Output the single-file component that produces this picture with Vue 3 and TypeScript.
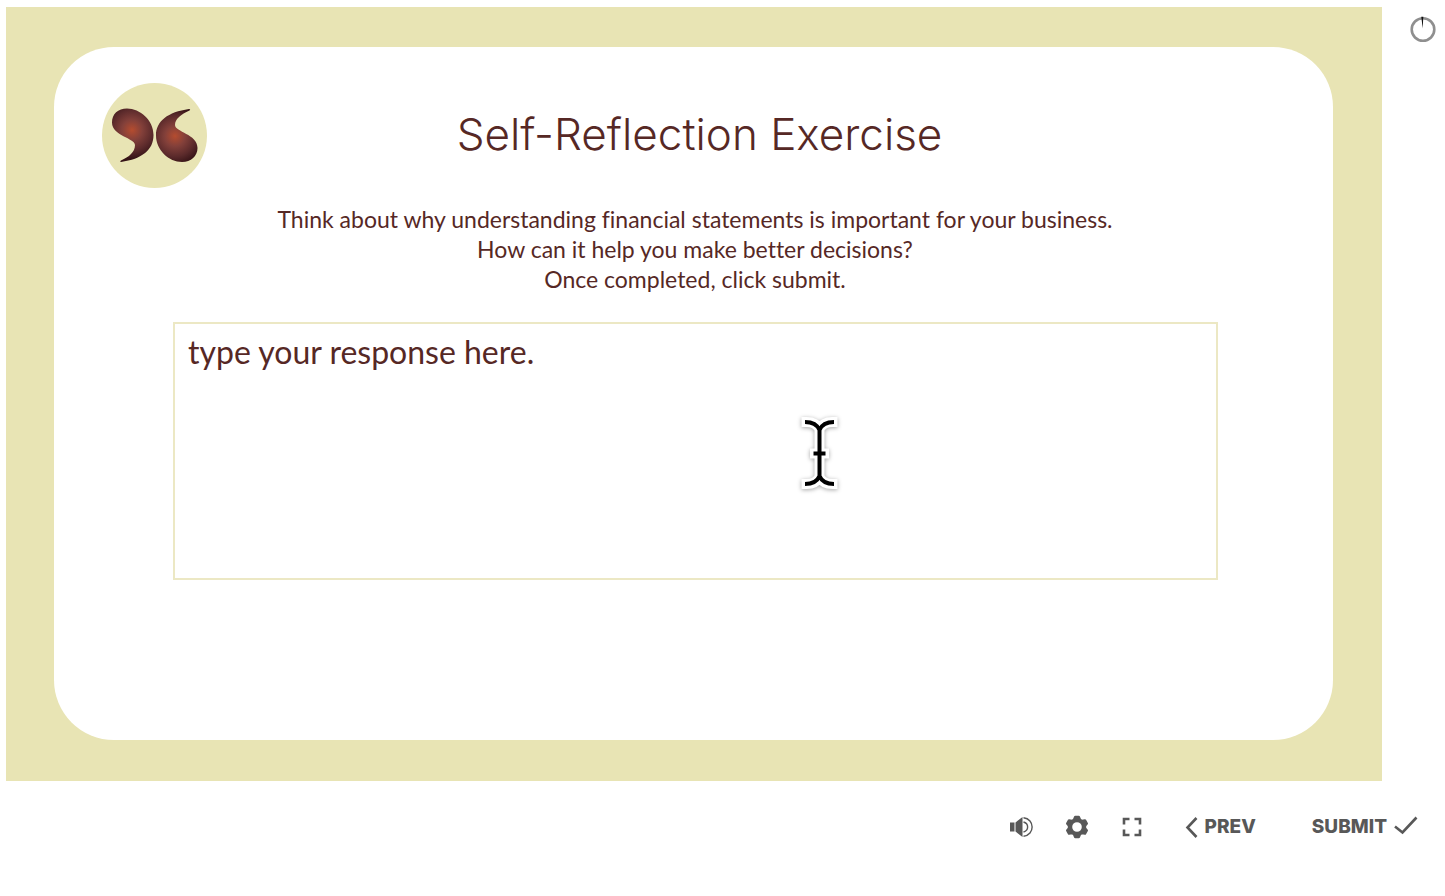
<script setup lang="ts">
import { ref } from 'vue'

const response = ref<string>('type your response here.')
const lines: string[] = [
  'Think about why understanding financial statements is important for your business.',
  'How can it help you make better decisions?',
  'Once completed, click submit.',
]
</script>

<template>
  <div class="player">
    <div class="stage">
      <main class="slide">
        <section class="card">
          <header class="head">
            <svg class="logo" viewBox="0 0 105 105" aria-hidden="true">
              <defs>
                <radialGradient id="bean-left" gradientUnits="userSpaceOnUse" cx="30" cy="47" r="34">
                  <stop offset="0" stop-color="#b54c2f" />
                  <stop offset="0.300" stop-color="#83403a" />
                  <stop offset="0.600" stop-color="#5b2a2b" />
                  <stop offset="0.850" stop-color="#351316" />
                </radialGradient>
                <radialGradient id="bean-right" gradientUnits="userSpaceOnUse" cx="73" cy="53" r="34">
                  <stop offset="0" stop-color="#b54c2f" />
                  <stop offset="0.300" stop-color="#83403a" />
                  <stop offset="0.600" stop-color="#5b2a2b" />
                  <stop offset="0.850" stop-color="#351316" />
                </radialGradient>
              </defs>
              <circle cx="52.5" cy="52.5" r="52.5" fill="#e8e4b4" />
              <path
                fill="url(#bean-left)"
                d="M25 25.500C38 25.500 51.500 37 51.500 52C51.500 67 40 76 19 79C18 78.500 18 78 19 77.500C27 74 33 69 33 62C33 55 10 53 10 39.500C10 31 16 25.500 25 25.500Z"
              />
              <path
                fill="url(#bean-right)"
                d="M80 79C67 79 54 67 54 52.500C54 38 66 29 87 26C88.500 26.200 88.500 27 87.500 27.500C79 31.500 73 36 73 42C73 49 95.500 51 95.500 65C95.500 73 89 79 80 79Z"
              />
            </svg>
            <h1 class="title">Self-Reflection Exercise</h1>
          </header>
          <p class="prompt">
            <span v-for="line in lines" :key="line" class="line">{{ line }}</span>
          </p>
          <div class="answer">
            <textarea v-model="response" class="field" aria-label="Your response" spellcheck="false"></textarea>
            <svg class="caret" viewBox="0 0 40 80" aria-hidden="true">
              <g fill="none">
                <path class="halo" d="M6.500 8C12 8 17 10 19.500 15C22 10 27 8 32.500 8M6.500 70C12 70 17 68 19.500 63C22 68 27 70 32.500 70M19.500 15V63M15 39.500H24" />
                <path class="ink" d="M5 8C12 8 17 10 19.500 16C22 10 27 8 34 8M5 70C12 70 17 68 19.500 62C22 68 27 70 34 70M19.500 14V64M13.500 39.500H25.500" />
              </g>
            </svg>
          </div>
        </section>
      </main>
      <svg class="timer" viewBox="0 0 27 27" role="img" aria-label="Time elapsed">
        <circle cx="14" cy="13.5" r="11.300" fill="none" stroke="#8f8f8f" stroke-width="2.600" />
        <path d="M12.300 0.800H14.300L13.700 12.500Z" fill="#111" />
      </svg>
    </div>

    <footer class="controls">
      <button type="button" class="control" aria-label="Volume">
        <svg width="24" height="24" viewBox="0 0 24 24" aria-hidden="true">
          <path d="M0 7.500H4.500V16.500H0ZM5.500 7.500L12.500 2V22L5.500 16.500Z" fill="#585858" />
          <path d="M13.500 7C19 8.500 19 15.500 13.500 17M13.500 2.800C25 4 25 20 13.500 21.200" fill="none" stroke="#585858" stroke-width="1.400" />
        </svg>
      </button>
      <button type="button" class="control" aria-label="Settings">
        <svg width="24" height="24" viewBox="0 0 24 24" aria-hidden="true">
          <path
            fill="#585858"
            fill-rule="evenodd"
            d="M10.200 2H13.800L15 4.800L17 6L20 5.400L21.800 8.500L20 10.900V13.100L21.800 15.500L20 18.600L17 18L15 19.200L13.800 22H10.200L9 19.200L7 18L4 18.600L2.200 15.500L4 13.100V10.900L2.200 8.500L4 5.400L7 6L9 4.800ZM12 6A6 6 0 1 0 12 18A6 6 0 1 0 12 6Z"
            stroke="#585858"
            stroke-width="2.400"
            stroke-linejoin="round"
          />
        </svg>
      </button>
      <button type="button" class="control" aria-label="Full screen">
        <svg width="24" height="24" viewBox="0 0 24 24" aria-hidden="true">
          <path d="M4 9.500V4H9.500M14.500 4H20V9.500M20 14.500V20H14.500M9.500 20H4V14.500" fill="none" stroke="#585858" stroke-width="2.600" />
        </svg>
      </button>
      <button type="button" class="control prev">
        <svg width="13" height="24" viewBox="0 0 13 24" aria-hidden="true">
          <path d="M11.500 3L2.500 12.500L11.500 22" fill="none" stroke="#585858" stroke-width="2.600" />
        </svg>
        <span>PREV</span>
      </button>
      <button type="button" class="control">
        <span>SUBMIT</span>
        <svg width="24" height="24" viewBox="0 0 24 24" aria-hidden="true">
          <path d="M1 11.500L8.500 17.500L22.500 2.500" fill="none" stroke="#585858" stroke-width="2.600" />
        </svg>
      </button>
    </footer>
  </div>
</template>

<style>
body {
  margin: 0;
  background: #fff;
}
</style>

<style scoped>
.player {
  box-sizing: border-box;
  padding: 7px 9px 0 6px;
  font-family: Inter, "Liberation Sans", sans-serif;
}
.stage {
  display: grid;
  grid-template-columns: 1fr 27px;
  column-gap: 27px;
  align-items: start;
}
.slide {
  display: flex;
  box-sizing: border-box;
  aspect-ratio: 16 / 9;
  padding: 40px 49px 41px 48px;
  background: #e8e4b4;
}
.card {
  flex: 1;
  box-sizing: border-box;
  padding: 36px 48px;
  border-radius: 60px;
  background: #fff;
  color: #562825;
}
.head {
  display: grid;
  grid-template-columns: 105px 1fr 93px;
  align-items: center;
}
.logo {
  display: block;
  width: 105px;
  height: 105px;
}
.title {
  margin: 0;
  padding-bottom: 4px;
  font-size: 44px;
  font-weight: 300;
  line-height: 56px;
  text-align: center;
}
.prompt {
  margin: 16px 0 28px;
  padding-left: 3px;
  font-family: Lato, "Liberation Sans", sans-serif;
  font-size: 23px;
  font-weight: 400;
  font-variant-ligatures: none;
  line-height: 30px;
  text-align: center;
}
.line {
  display: block;
}
.answer {
  position: relative;
  margin: 0 67px 0 71px;
}
.field {
  display: block;
  box-sizing: border-box;
  width: 100%;
  height: 258px;
  padding: 8px 13px;
  border: 2px solid #ece8c4;
  border-radius: 0;
  outline: none;
  resize: none;
  background: transparent;
  color: inherit;
  font-family: Lato, "Liberation Sans", sans-serif;
  font-size: 32px;
  line-height: 40px;
}
.caret {
  position: absolute;
  top: 92px;
  left: 60%;
  width: 40px;
  height: 80px;
  overflow: visible;
}
.halo {
  stroke: #fff;
  stroke-width: 10px;
  stroke-linecap: square;
  filter: drop-shadow(0 1px 2px rgba(0, 0, 0, 0.35));
}
.ink {
  stroke: #000;
  stroke-width: 4px;
}
.timer {
  width: 27px;
  height: 27px;
  margin-top: 9px;
}
.controls {
  display: flex;
  justify-content: flex-end;
  align-items: center;
  gap: 31px;
  height: 91px;
  padding-right: 18px;
}
.control {
  display: flex;
  align-items: center;
  gap: 7px;
  padding: 0;
  border: 0;
  background: none;
  color: #585858;
  font-family: inherit;
  font-size: 19px;
  font-weight: 800;
  line-height: 24px;
  cursor: pointer;
}
.prev {
  margin: 0 25px 0 10px;
}
</style>
